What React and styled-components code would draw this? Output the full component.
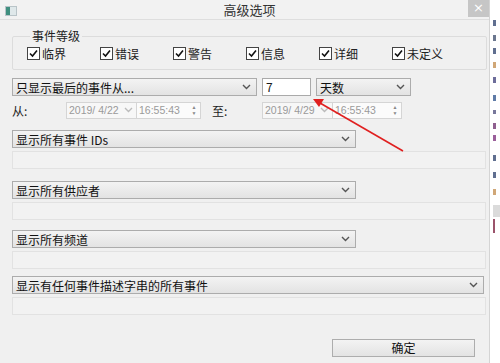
import React from 'react';
import styled, { createGlobalStyle } from 'styled-components';

const GlobalStyle = createGlobalStyle`
  html, body { margin: 0; padding: 0; background: #fff; }
  body {
    font-family: "Noto Sans CJK SC", "Noto Sans", "Liberation Sans", sans-serif;
    font-size: 12px;
    color: #1a1a1a;
  }
`;

const Screen = styled.div`
  position: relative;
  display: flex;
  width: 500px;
  height: 363px;
  overflow: hidden;
`;

const Dialog = styled.div`
  width: 489px;
  height: 363px;
  background: #f0f0f0;
  border-right: 1px solid #d4d4d4;
  display: flex;
  flex-direction: column;
`;

const TitleBar = styled.div`
  height: 19px;
  border-bottom: 1px solid #dedede;
  background: #f2f2f2;
  display: flex;
  align-items: flex-start;
`;

const AppIcon = styled.div`
  width: 10px;
  height: 8px;
  margin: 6px 0 0 5px;
  background: linear-gradient(90deg, #3f8f7f 0 40%, #dfe8ea 40%);
  border: 1px solid #b9c4c8;
`;

const Title = styled.div`
  flex: 1;
  text-align: center;
  font-size: 13px;
  line-height: 20px;
  color: #333;
  padding-left: 14px;
`;

const CloseBtn = styled.div`
  width: 21px;
  height: 17px;
  background: #c6c6c6;
  color: #fff;
  font-size: 13px;
  line-height: 16px;
  text-align: center;
  font-family: "DejaVu Sans", sans-serif;
`;

const Body = styled.div`
  padding: 0 2px 0 12px;
  display: flex;
  flex-direction: column;
`;

const Group = styled.fieldset`
  margin: 9px 0 0 0;
  padding: 0 0 0 14px;
  border: 1px solid #dcdcdc;
  border-radius: 2px;
`;

const Legend = styled.legend`
  padding: 0 2px;
  margin-left: 3px;
  font-size: 12px;
  color: #222;
  line-height: 14px;
`;

const CheckRow = styled.div`
  height: 31px;
  margin-top: -5px;
  display: flex;
  align-items: center;
`;

const Check = styled.label`
  width: 73px;
  display: flex;
  align-items: center;
  gap: 2px;
  font-size: 12px;
  color: #222;
`;

const Box = styled.span`
  width: 11px;
  height: 11px;
  border: 1px solid #444;
  background: #fff;
  display: flex;
  align-items: center;
  justify-content: center;
`;

const Row = styled.div`
  display: flex;
  align-items: center;
  gap: ${p => p.$gap ?? 5}px;
  margin-top: ${p => p.$top || 0}px;
  height: 18px;
`;

const Select = styled.div`
  box-sizing: border-box;
  width: ${p => p.$w}px;
  height: 18px;
  border: 1px solid #acacac;
  background: linear-gradient(#f3f3f3, #e3e3e3);
  display: flex;
  align-items: center;
  padding-left: 3px;
  font-size: 12px;
  color: #111;
  white-space: nowrap;
`;

const SelectText = styled.span`
  flex: 1;
`;

const Chevron = styled.svg`
  width: 9px;
  height: 6px;
  flex-shrink: 0;
  margin-right: ${p => p.$mr ?? 5}px;
`;

const TextInput = styled.div`
  box-sizing: border-box;
  width: ${p => p.$w}px;
  height: 18px;
  border: 1px solid #aaa;
  background: #fff;
  padding-left: 3px;
  font-size: 12px;
  line-height: 16px;
`;

const Label = styled.span`
  box-sizing: border-box;
  width: ${p => p.$w}px;
  padding-left: ${p => p.$pad || 0}px;
  font-size: 12px;
  color: #222;
`;

const DateBox = styled.div`
  box-sizing: border-box;
  width: 71px;
  height: 17px;
  border: 1px solid #d5d5d5;
  background: #f7f7f7;
  display: flex;
  align-items: center;
  padding-left: 2px;
  color: #9a9a9a;
  font-size: 10.5px;
  font-family: "Liberation Sans", sans-serif;
  white-space: pre;
  overflow: hidden;
`;

const DateText = styled.span`
  flex: 1;
`;

const TimeBox = styled(DateBox)`
  width: ${p => p.$w || 64}px;
  border-left: none;
  background: #fbfbfb;
`;

const Spin = styled.div`
  margin-right: 3px;
  width: 6px;
  display: flex;
  flex-direction: column;
  align-items: center;
  font-size: 5px;
  line-height: 6px;
  color: #888;
`;

const Field = styled.div`
  box-sizing: border-box;
  height: 18px;
  margin-top: 3px;
  border: 1px solid #e2e2e2;
  background: #f2f2f2;
  width: 474px;
`;

const Footer = styled.div`
  display: flex;
  justify-content: flex-end;
  margin-top: 24px;
  padding-right: 12px;
`;

const OkButton = styled.div`
  box-sizing: border-box;
  width: 143px;
  height: 18px;
  border: 1px solid #adadad;
  background: linear-gradient(#f3f3f3, #e3e3e3);
  text-align: center;
  font-size: 12px;
  line-height: 16px;
  color: #111;
`;

const Backdrop = styled.div`
  flex: 1;
  background: #fff;
  display: flex;
  flex-direction: column;
  padding-left: 3px;
`;

const Frag = styled.div`
  width: ${p => p.$w || 3}px;
  height: ${p => p.$h || 6}px;
  margin-top: ${p => p.$top}px;
  background: ${p => p.$c};
  opacity: 0.75;
`;

const Overlay = styled.svg`
  position: absolute;
  left: 0;
  top: 0;
  pointer-events: none;
`;

const Arrow = ({ color = '#555', mr }) => (
  <Chevron viewBox="0 0 9 6" $mr={mr}>
    <path d="M1 1 L4.5 4.5 L8 1" fill="none" stroke={color} strokeWidth="1.4" />
  </Chevron>
);

const Dropdown = ({ w, children }) => (
  <Select $w={w}>
    <SelectText>{children}</SelectText>
    <Arrow />
  </Select>
);

const CheckItem = ({ children }) => (
  <Check>
    <Box>
      <svg width="9" height="9" viewBox="0 0 9 9">
        <path d="M1 4.5 L3.5 7 L8 1.5" fill="none" stroke="#111" strokeWidth="1.6" />
      </svg>
    </Box>
    {children}
  </Check>
);

const DateTime = ({ date, timeW }) => (
  <>
    <DateBox>
      <DateText>{date}</DateText>
      <Arrow color="#bbb" mr={3} />
    </DateBox>
    <TimeBox $w={timeW}>
      <DateText>16:55:43</DateText>
      <Spin>
        <span>▲</span>
        <span>▼</span>
      </Spin>
    </TimeBox>
  </>
);

const levels = ['临界', '错误', '警告', '信息', '详细', '未定义'];

const filters = [
  { text: '显示所有事件 IDs', w: 344, top: 11 },
  { text: '显示所有供应者', w: 344, top: 12 },
  { text: '显示所有频道', w: 344, top: 10 },
  { text: '显示有任何事件描述字串的所有事件', w: 472, top: 7 },
];

const frags = [
  { top: 20, c: '#2b3f6b' }, { top: 9, c: '#3a4a6a' }, { top: 7, c: '#2b3f6b' },
  { top: 8, c: '#c08a4a' }, { top: 9, c: '#3c3c7a' }, { top: 12, c: '#2a4f8a' },
  { top: 9, c: '#4a4a7a', h: 4 }, { top: 9, c: '#6a2a6a' }, { top: 6, c: '#7a2a7a' },
  { top: 14, c: '#2b3f6b' }, { top: 11, c: '#2b3f6b' }, { top: 11, c: '#c08a4a' },
  { top: 10, c: '#cfcfcf', h: 12, w: 7 }, { top: 2, c: '#7a1a3a', h: 14, w: 2 },
];

export default function App() {
  return (
    <>
      <GlobalStyle />
      <Screen>
        <Dialog>
          <TitleBar>
            <AppIcon />
            <Title>高级选项</Title>
            <CloseBtn>×</CloseBtn>
          </TitleBar>
          <Body>
            <Group>
              <Legend>事件等级</Legend>
              <CheckRow>
                {levels.map(l => (
                  <CheckItem key={l}>{l}</CheckItem>
                ))}
              </CheckRow>
            </Group>
            <Row $top={8}>
              <Dropdown w={245}>只显示最后的事件从...</Dropdown>
              <TextInput $w={49}>7</TextInput>
              <Dropdown w={95}>天数</Dropdown>
            </Row>
            <Row $top={5} $gap={0}>
              <Label $w={54}>从:</Label>
              <DateTime date="2019/ 4/22" timeW={64} />
              <Label $w={61} $pad={11}>至:</Label>
              <DateTime date="2019/ 4/29" timeW={69} />
            </Row>
            {filters.map(f => (
              <React.Fragment key={f.text}>
                <Row $top={f.top}>
                  <Dropdown w={f.w}>{f.text}</Dropdown>
                </Row>
                <Field />
              </React.Fragment>
            ))}
            <Footer>
              <OkButton>确定</OkButton>
            </Footer>
          </Body>
        </Dialog>
        <Backdrop>
          {frags.map((f, i) => (
            <Frag key={i} $top={f.top} $c={f.c} $h={f.h} $w={f.w} />
          ))}
        </Backdrop>
        <Overlay width="500" height="363" viewBox="0 0 500 363">
          <line x1="403" y1="151" x2="320" y2="103" stroke="#e02020" strokeWidth="1.6" />
          <polygon points="313,99 324,99 319,107" fill="#e02020" />
        </Overlay>
      </Screen>
    </>
  );
}
